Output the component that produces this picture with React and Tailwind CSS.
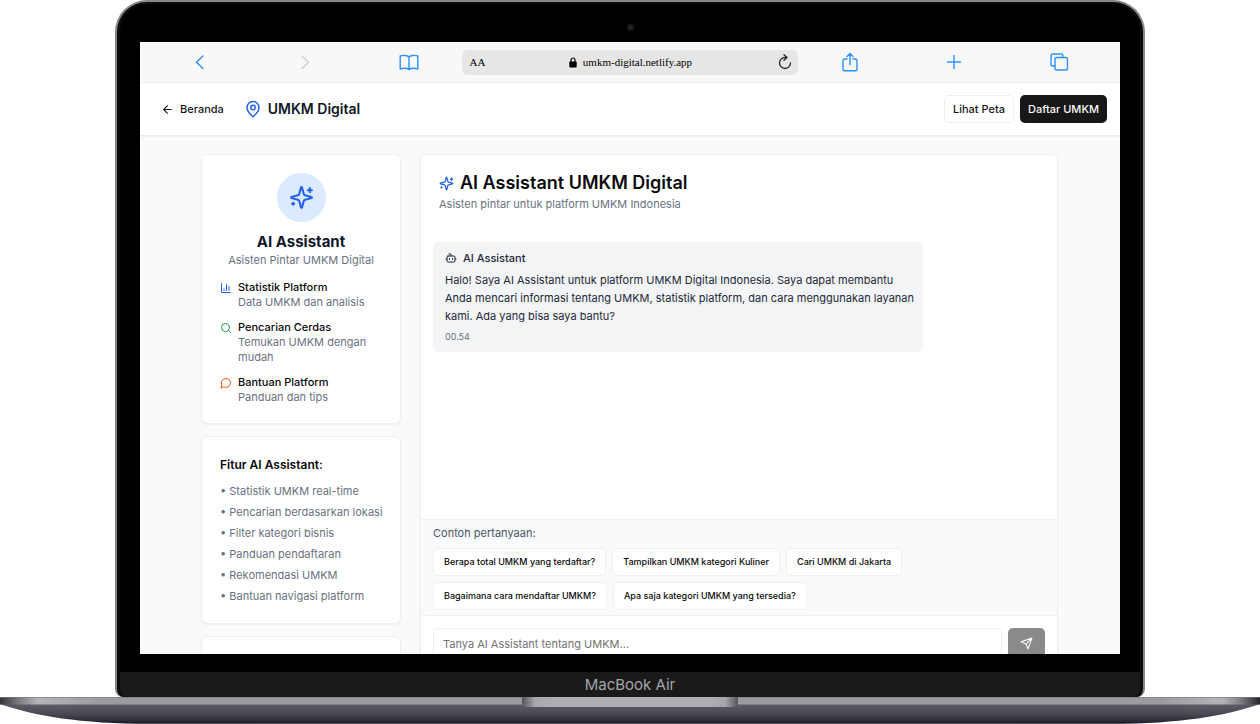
import { useState } from "react";
import { ArrowLeft, Bot, MapPin, Search } from "lucide-react";

// ─── Icons ────────────────────────────────────────────────────────────────────
function Icon({ size, className, children }) {
  return (
    <svg
      width={size}
      height={size}
      viewBox="0 0 24 24"
      fill="none"
      stroke="currentColor"
      strokeWidth="2"
      strokeLinecap="round"
      strokeLinejoin="round"
      className={className}
    >
      {children}
    </svg>
  );
}

function Sparkles(props) {
  return (
    <Icon {...props}>
      <path d="M9.937 15.500A2 2 0 0 0 8.500 14.063l-6.135-1.582a.5.5 0 0 1 0-.962L8.500 9.936A2 2 0 0 0 9.937 8.500l1.582-6.135a.5.5 0 0 1 .963 0L14.063 8.500A2 2 0 0 0 15.500 9.937l6.135 1.581a.5.5 0 0 1 0 .964L15.500 14.063a2 2 0 0 0-1.437 1.437l-1.582 6.135a.5.5 0 0 1-.963 0z" />
      <path d="M20 3v4M22 5h-4M4 17v2M5 18H3" />
    </Icon>
  );
}

function BarChart(props) {
  return (
    <Icon {...props}>
      <path d="M3 3v18h18M18 17V9M13 17V5M8 17v-3" />
    </Icon>
  );
}

function Bubble(props) {
  return (
    <Icon {...props}>
      <path d="M7.900 20A9 9 0 1 0 4 16.100L2 22Z" />
    </Icon>
  );
}

function Plane(props) {
  return (
    <Icon {...props}>
      <path d="m22 2-7 20-4-9-9-4ZM22 2 11 13" />
    </Icon>
  );
}

// ─── Data ─────────────────────────────────────────────────────────────────────
const CAPABILITIES = [
  { Glyph: BarChart, color: "text-[#2563eb]", title: "Statistik Platform", text: "Data UMKM dan analisis" },
  { Glyph: Search,   color: "text-[#16a34a]", title: "Pencarian Cerdas",   text: "Temukan UMKM dengan mudah" },
  { Glyph: Bubble,   color: "text-[#ea580c]", title: "Bantuan Platform",   text: "Panduan dan tips" },
];

const FEATURES = [
  "Statistik UMKM real-time",
  "Pencarian berdasarkan lokasi",
  "Filter kategori bisnis",
  "Panduan pendaftaran",
  "Rekomendasi UMKM",
  "Bantuan navigasi platform",
];

const QUESTIONS = [
  "Berapa total UMKM yang terdaftar?",
  "Tampilkan UMKM kategori Kuliner",
  "Cari UMKM di Jakarta",
  "Bagaimana cara mendaftar UMKM?",
  "Apa saja kategori UMKM yang tersedia?",
];

// ─── Browser toolbar ──────────────────────────────────────────────────────────
function ToolButton({ label, disabled, children }) {
  return (
    <button
      type="button"
      aria-label={label}
      disabled={disabled}
      className="justify-self-center text-[#2f8ffb] disabled:text-[#cfcfcf]"
    >
      <svg
        width="20"
        height="20"
        viewBox="0 0 20 20"
        fill="none"
        stroke="currentColor"
        strokeWidth="1.4"
        strokeLinecap="round"
        strokeLinejoin="round"
      >
        {children}
      </svg>
    </button>
  );
}

function BrowserBar() {
  return (
    <div className="grid h-[41px] shrink-0 grid-cols-[1fr_1fr_1fr_336px_1fr_1fr_1fr] items-center border-b border-[#efefef] bg-[#f8f8f8] pr-[9px] pl-2">
      <ToolButton label="Back">
        <path d="M13 4 6.500 10.200l6.500 6.300" />
      </ToolButton>
      <ToolButton label="Forward" disabled>
        <path d="m7 4 6.500 6.200L7 16.500" />
      </ToolButton>
      <ToolButton label="Bookmarks">
        <path d="M10 4.900C8.500 3.200 4 3 1.200 4v13c3-.8 7.200-.8 8.800.6 1.600-1.400 5.800-1.400 8.800-.6V4C16 3 11.500 3.200 10 4.900v12.700" />
      </ToolButton>

      <div className="grid h-[25px] grid-cols-[1fr_auto_1fr] items-center rounded-md bg-[#e6e6e6] pr-1.5 pl-2 font-['Liberation_Serif',serif] text-[11px] text-black">
        <span>AA</span>
        <span className="flex items-center gap-1.5">
          <svg width="8" height="11" viewBox="0 0 8 11">
            <path d="M2 5V3a2 2 0 0 1 4 0v2" fill="none" stroke="#000" strokeWidth="1.200" />
            <rect x="0.300" y="4.500" width="7.400" height="6" rx="1" />
          </svg>
          umkm-digital.netlify.app
        </span>
        <button type="button" aria-label="Reload" className="justify-self-end">
          <svg width="14" height="16" viewBox="0 0 14 16" fill="none" stroke="#222" strokeWidth="1.300">
            <path d="M8 3.500H7a5.500 5.500 0 1 0 5.500 5.500" strokeLinecap="round" />
            <path d="M6 .8l3 2.700-3 2.700" strokeLinecap="round" strokeLinejoin="round" />
          </svg>
        </button>
      </div>

      <ToolButton label="Share">
        <path d="M7 7H4.500A1.500 1.500 0 0 0 3 8.500v8.700a1.500 1.500 0 0 0 1.500 1.500h11a1.500 1.500 0 0 0 1.500-1.500V8.500A1.500 1.500 0 0 0 15.500 7H13M10 12.800V1.700M7 4.400l3-2.900 3 2.900" />
      </ToolButton>
      <ToolButton label="New tab">
        <path d="M10 3.500v13M3.500 10h13" />
      </ToolButton>
      <ToolButton label="Tabs">
        <path d="M6 14H3.800A1.800 1.800 0 0 1 2 12.200V3.800A1.800 1.800 0 0 1 3.800 2H12a1.800 1.800 0 0 1 1.800 1.800V5.500" />
        <rect x="6" y="5.500" width="12.500" height="12.500" rx="1.800" />
      </ToolButton>
    </div>
  );
}

// ─── Site header ──────────────────────────────────────────────────────────────
function SiteHeader() {
  return (
    <header className="flex h-[53px] shrink-0 items-center justify-between border-b border-[#ececee] bg-white pr-[13px] pl-[21px] shadow-xs">
      <div className="flex items-center gap-5">
        <a href="#beranda" className="flex items-center gap-1.5 text-[11px] font-medium text-neutral-900">
          <ArrowLeft size={13} />
          Beranda
        </a>
        <a href="#umkm" className="flex items-center gap-1.5 text-sm font-semibold text-gray-900">
          <MapPin size={18} className="text-[#2563eb]" />
          UMKM Digital
        </a>
      </div>
      <div className="flex items-center gap-1.5 text-[11px] font-medium">
        <button type="button" className="h-7 rounded-[5px] border border-neutral-200/60 px-2 text-neutral-900">
          Lihat Peta
        </button>
        <button type="button" className="h-7 rounded-[5px] bg-neutral-900 px-2 text-neutral-50">
          Daftar UMKM
        </button>
      </div>
    </header>
  );
}

// ─── Sidebar ──────────────────────────────────────────────────────────────────
function Card({ children }) {
  return (
    <section className="rounded-md border border-[#efeff1] bg-white px-[18px] shadow-xs">
      {children}
    </section>
  );
}

function Sidebar() {
  return (
    <aside className="flex w-[200px] shrink-0 flex-col gap-3">
      <Card>
        <div className="py-[18px]">
          <div className="mx-auto flex size-[49px] items-center justify-center rounded-full bg-blue-100">
            <Sparkles size={25} className="text-[#2563eb]" />
          </div>
          <h2 className="mt-2.5 text-center text-[15px] leading-5 font-bold text-gray-900">
            AI Assistant
          </h2>
          <p className="text-center text-[11px] leading-4 text-gray-500">
            Asisten Pintar UMKM Digital
          </p>
          <ul className="mt-3 flex flex-col gap-2.5 text-[11px] leading-[15px]">
            {CAPABILITIES.map(({ Glyph, color, title, text }) => (
              <li key={title} className="flex gap-1.5">
                <Glyph size={12} className={`mt-0.5 shrink-0 ${color}`} />
                <div>
                  <p className="font-medium text-neutral-950">{title}</p>
                  <p className="text-gray-500">{text}</p>
                </div>
              </li>
            ))}
          </ul>
        </div>
      </Card>

      <Card>
        <div className="py-[18px]">
          <h3 className="text-xs leading-5 font-semibold text-neutral-950">Fitur AI Assistant:</h3>
          <ul className="my-[9px] mb-[1px] flex flex-col gap-1.5 text-[11px] leading-[15px] text-gray-500">
            {FEATURES.map((feature) => (
              <li key={feature} className="whitespace-nowrap">• {feature}</li>
            ))}
          </ul>
        </div>
      </Card>

      <Card>
        <div className="h-[120px]" />
      </Card>
    </aside>
  );
}

// ─── Chat ─────────────────────────────────────────────────────────────────────
function Chat() {
  const [draft, setDraft] = useState("");

  return (
    <main className="flex min-w-0 flex-1 flex-col rounded-md border border-[#efeff1] bg-white shadow-xs">
      <div className="px-[18px] pt-4 pb-[17px]">
        <h1 className="flex items-center gap-1.5 text-lg leading-6 font-semibold text-neutral-950">
          <Sparkles size={15} className="text-[#2563eb]" />
          AI Assistant UMKM Digital
        </h1>
        <p className="text-[11px] leading-[18px] text-gray-500">
          Asisten pintar untuk platform UMKM Indonesia
        </p>
      </div>

      <div className="h-[289px] px-3 pt-3">
        <article className="w-4/5 rounded-md bg-gray-100 py-2 pr-2 pl-3 text-[11px] text-gray-800">
          <p className="flex items-center gap-1.5 leading-4 font-medium">
            <Bot size={12} />
            AI Assistant
          </p>
          <p className="mt-[5px] leading-[18px]">
            Halo! Saya AI Assistant untuk platform UMKM Digital Indonesia. Saya dapat membantu
            Anda mencari informasi tentang UMKM, statistik platform, dan cara menggunakan layanan
            kami. Ada yang bisa saya bantu?
          </p>
          <time className="mt-1 block text-[9px] leading-[15px] text-gray-500">00.54</time>
        </article>
      </div>

      <div className="border-y border-[#f0f1f3] bg-gray-50 px-3 py-[5px]">
        <p className="text-[11px] leading-4 text-gray-600">Contoh pertanyaan:</p>
        <div className="mt-[7px] flex flex-wrap gap-1.5">
          {QUESTIONS.map((question) => (
            <button
              key={question}
              type="button"
              onClick={() => setDraft(question)}
              className="h-7 rounded-[5px] border border-neutral-200/60 bg-white px-2.5 text-[9px] font-medium text-neutral-950"
            >
              {question}
            </button>
          ))}
        </div>
      </div>

      <form className="flex gap-1.5 p-3" onSubmit={(e) => e.preventDefault()}>
        <input
          type="text"
          aria-label="Pertanyaan"
          value={draft}
          onChange={(e) => setDraft(e.target.value)}
          placeholder="Tanya AI Assistant tentang UMKM..."
          className="h-[31px] min-w-0 flex-1 rounded-[5px] border border-neutral-200/60 px-[9px] text-[11px] placeholder:text-neutral-500"
        />
        <button
          type="submit"
          aria-label="Kirim"
          disabled={!draft}
          className="flex h-[31px] w-[37px] items-center justify-center rounded-[5px] bg-neutral-900 text-neutral-50 disabled:opacity-50"
        >
          <Plane size={13} />
        </button>
      </form>
    </main>
  );
}

// ─── Laptop base ──────────────────────────────────────────────────────────────
function LaptopBase() {
  return (
    <svg className="block h-[27px] w-full shrink-0" viewBox="0 0 1260 27" preserveAspectRatio="none">
      <defs>
        <linearGradient id="edge">
          <stop offset="0" stopColor="#33343a" />
          <stop offset="0.015" stopColor="#7d7e83" />
          <stop offset="0.030" stopColor="#b4b5ba" />
          <stop offset="0.080" stopColor="#9b9ca1" />
          <stop offset="0.920" stopColor="#9b9ca1" />
          <stop offset="0.970" stopColor="#b4b5ba" />
          <stop offset="0.985" stopColor="#7d7e83" />
          <stop offset="1" stopColor="#23242c" />
        </linearGradient>
        <linearGradient id="under" x2="0" y2="1">
          <stop offset="0" stopColor="#5d5e65" />
          <stop offset="0.500" stopColor="#484952" />
          <stop offset="0.850" stopColor="#2b2c37" />
          <stop offset="1" stopColor="#171725" />
        </linearGradient>
        <linearGradient id="notch">
          <stop offset="0" stopColor="#55565c" />
          <stop offset="0.060" stopColor="#a6a7ac" />
          <stop offset="0.120" stopColor="#acadb2" />
          <stop offset="0.880" stopColor="#acadb2" />
          <stop offset="0.940" stopColor="#a6a7ac" />
          <stop offset="1" stopColor="#55565c" />
        </linearGradient>
      </defs>
      <path d="M0 7h1260C1225 19 1180 26.800 1110 26.800H150C80 26.800 35 19 0 7Z" fill="url(#under)" />
      <rect width="1260" height="7.500" fill="url(#edge)" />
      <path d="M0 .3h1260" stroke="#77787d" strokeWidth="0.800" />
      <path d="M522 0h216v6q0 4-5 4H527q-5 0-5-4Z" fill="url(#notch)" />
      <path d="M411 19h4M418 19h4M837 19h4M844 19h4" stroke="#3a3b44" strokeWidth="1.500" />
    </svg>
  );
}

// ─── App ──────────────────────────────────────────────────────────────────────
export default function App() {
  return (
    <div className="flex h-screen flex-col overflow-hidden bg-white font-[Inter,sans-serif]">
      <div className="mx-[115px] flex min-h-0 flex-1 flex-col overflow-hidden rounded-t-[32px] rounded-b-lg border-x-2 border-t-2 border-[#85868c] bg-[#0c0c0d]">
        <div className="mx-[3px] mt-0.5 flex min-h-0 flex-1 flex-col rounded-t-[28px] bg-black px-5">
          <div className="flex h-[38px] shrink-0 items-center justify-center">
            <span className="mt-[9px] size-[7px] rounded-full border-2 border-[#18191b] bg-[#2a2b2e]" />
          </div>

          <div className="flex min-h-0 flex-1 flex-col overflow-hidden bg-gray-50">
            <BrowserBar />
            <SiteHeader />
            <div className="flex min-h-0 flex-1 items-start gap-[19px] overflow-hidden pt-[18px] pr-[62px] pl-[61px]">
              <Sidebar />
              <Chat />
            </div>
          </div>

          <div className="h-[18px] shrink-0" />
        </div>
        <p className="mx-[3px] h-[25px] shrink-0 rounded-b-lg bg-[#1a1a1a] text-center text-[15px] leading-[25px] text-[#a5a6aa]">
          MacBook Air
        </p>
      </div>
      <LaptopBase />
    </div>
  );
}
